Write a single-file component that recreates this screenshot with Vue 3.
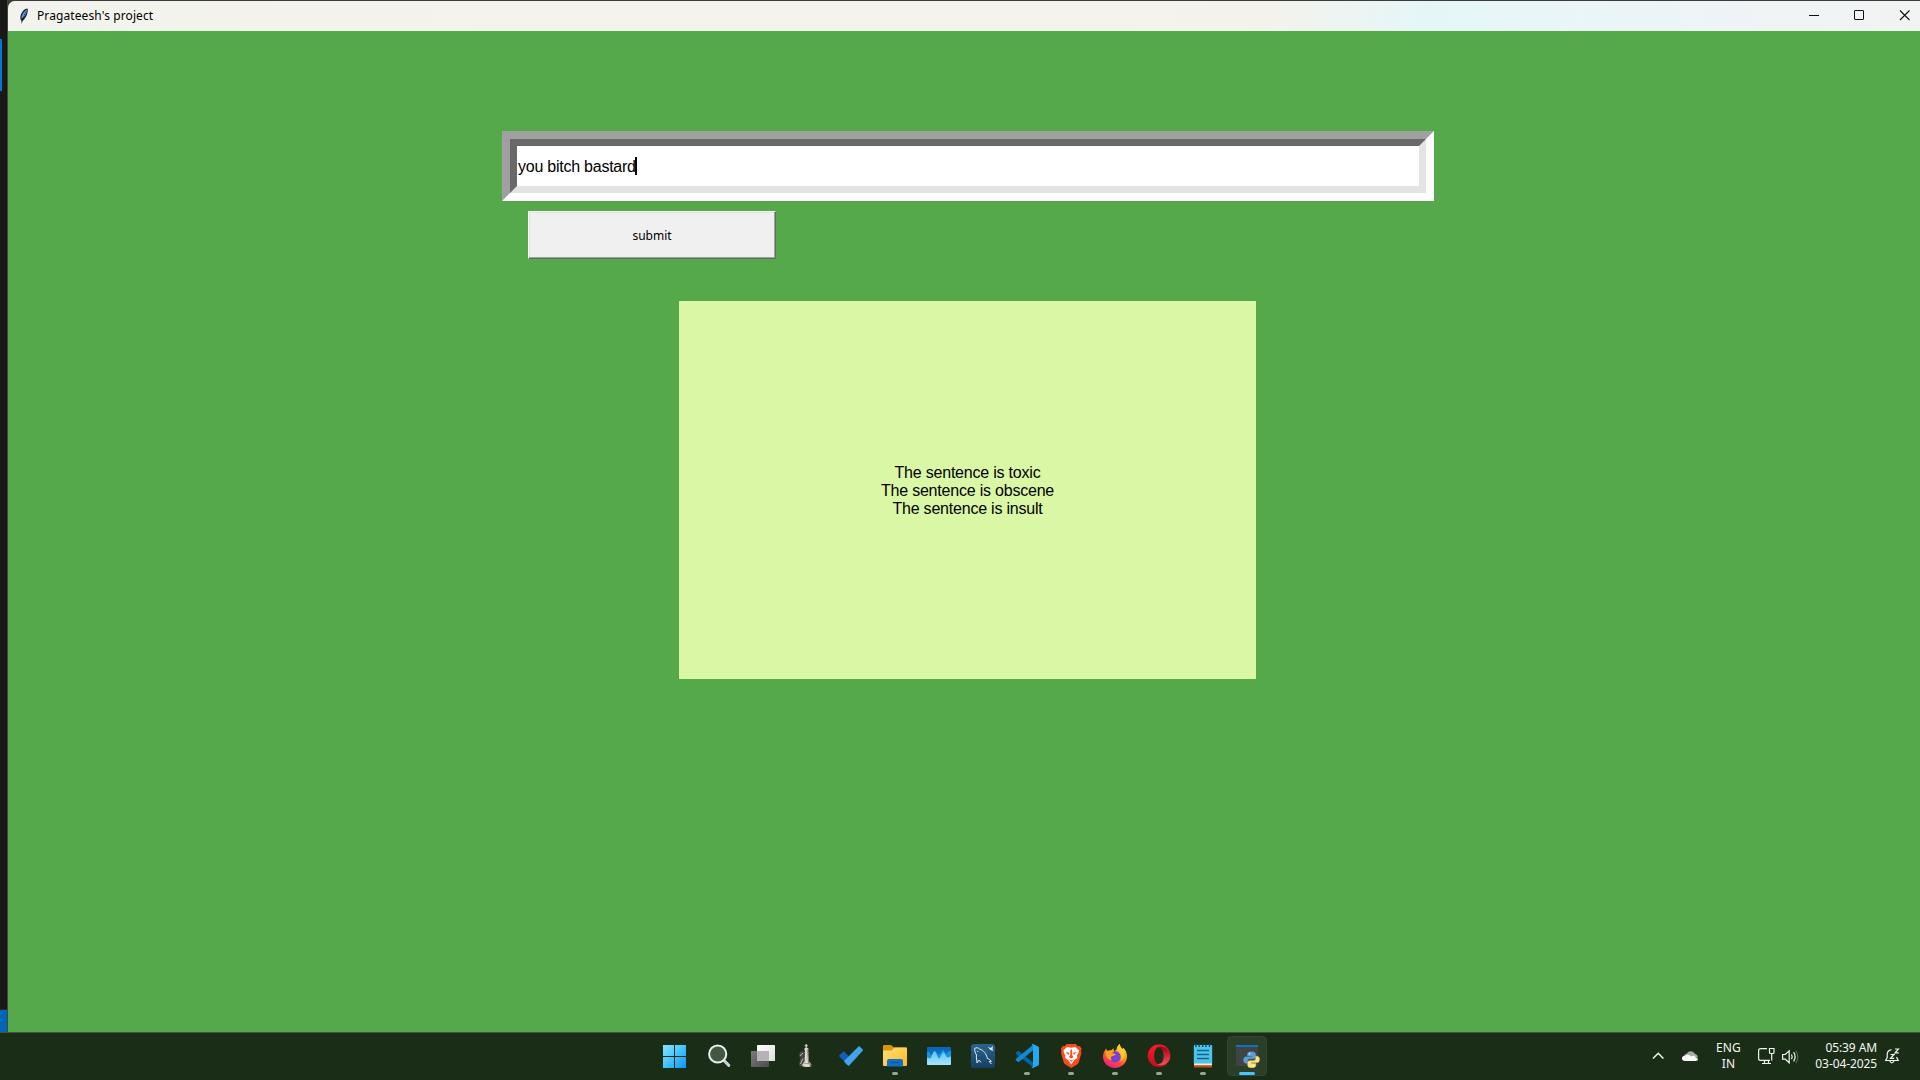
<script setup>
const results = ['The sentence is toxic', 'The sentence is obscene', 'The sentence is insult']
const entry = 'you bitch bastard'
</script>

<template>
  <div class="screen">
    <div class="desk">
      <div class="behind">
        <i class="accent"></i>
        <i class="status"></i>
      </div>
      <div class="window">
        <header class="titlebar">
          <svg class="feather" width="10" height="18" viewBox="0 0 10 18">
            <path d="M8.600 1.500C5.500 1.500 2.400 5 1.400 9.500c-.3 2 .2 3.500 1 4.200L2.600 17l1-3C6.500 12 9.500 6 8.600 1.500z" fill="#1c2536" />
            <path d="M7.900 2.400C5 4 3 7 2.200 11.500c2.600-1 5.600-4.500 5.700-9.100z" fill="#5f9ff0" />
            <path d="M6.800 4.500 2.700 14" stroke="#16243c" stroke-width=".8" stroke-dasharray="1.500 1.200" />
          </svg>
          <span class="title">Pragateesh's project</span>
          <svg class="controls" width="120" height="30" viewBox="0 0 120 30" fill="none" stroke="#111">
            <path d="M9 14.500h10" />
            <rect x="54.500" y="9.500" width="9" height="9" rx=".4" />
            <path d="M100 9.500l9.500 9.500M109.500 9.500 100 19" stroke-width="1.100" />
          </svg>
        </header>
        <main class="form">
          <div class="entry">
            <div class="entry-in"><div class="field"><span>{{ entry }}</span><i class="caret"></i></div></div>
          </div>
          <div class="button"><span>submit</span></div>
          <div class="result">
            <p v-for="r in results" :key="r">{{ r }}</p>
          </div>
        </main>
      </div>
    </div>

    <footer class="taskbar">
      <div class="apps">
        <svg viewBox="0 0 44 48">
          <defs><linearGradient id="win" gradientUnits="userSpaceOnUse" x1="11" y1="13" x2="34" y2="36"><stop offset="0" stop-color="#8be4ff" /><stop offset=".5" stop-color="#43c3fb" /><stop offset="1" stop-color="#0f93f6" /></linearGradient></defs>
          <path d="M11 13h11v11H11zM23 13h11v11H23zM11 25h11v11H11zM23 25h11v11H23z" fill="url(#win)" />
        </svg>
        <svg viewBox="0 0 44 48" fill="none">
          <path d="M27.500 28l5.300 5.400" stroke="#cfd4d6" stroke-width="3" stroke-linecap="round" />
          <circle cx="21.700" cy="22" r="8.600" fill="#44583f" stroke="#e9edee" stroke-width="2" />
        </svg>
        <svg viewBox="0 0 44 48">
          <defs>
            <linearGradient id="tvw" x1="0" y1="0" x2="1" y2="1"><stop offset="0" stop-color="#fff" /><stop offset="1" stop-color="#dedede" /></linearGradient>
            <linearGradient id="tvg" x1="0" y1="0" x2="1" y2="1"><stop offset="0" stop-color="#7c7c7c" /><stop offset="1" stop-color="#4d4d4d" /></linearGradient>
          </defs>
          <rect x="17" y="13" width="18" height="16" rx=".6" fill="url(#tvw)" />
          <rect x="11" y="19" width="18" height="16" rx=".6" fill="url(#tvg)" />
          <path d="M17 19h12v10H17z" fill="#b4b4b4" />
        </svg>
        <svg viewBox="0 0 44 48">
          <path d="M15 33c0-3 1.500-5 1.500-8-1.500 0-2-1-1.300-2.500.6-1.500 1.300-3.300 3.300-3.500 2.500.8 3.300 4 3 7l.5 8c-2 1.300-6 1-7-1z" fill="#4a4844" />
          <path d="M16.500 24l1-2 1.500-.8M16.500 32l2.300-5.500M18 33.500l2-3" stroke="#bab7af" stroke-width="1" fill="none" />
          <path d="M21.600 12h1.200v1.300h1v1h-1v1.500l1.700.8-.9 4h1.200l-.6 1.500.8 7.500 2.200 2.500.4 2c-2 1.300-7.500 1.400-9 0l.3-2 1.600-2.500.5-8-.6-1 .7-.3-.9-3.700 1.400-.8v-1.500h-.9v-1h.9z" fill="#d9d6ce" />
          <path d="M24 17v5l.5 8 2.300 4" stroke="#77736b" stroke-width="1" fill="none" />
          <path d="M19.500 31.500h7.500" stroke="#8e8a82" stroke-width=".7" />
          <path d="M26.500 34.700l3-1-2.300-2z" fill="#3d3a35" />
        </svg>
        <svg viewBox="0 0 44 48">
          <path d="M11.400 23.300l3.500-3.500q.7-.7 1.400 0l8.300 8.400-4.400 4.800-8.800-8.600q-.6-.6 0-1.100z" fill="#185abd" />
          <path d="M16.400 28.700 30.500 14.500q.6-.6 1.200 0l3 3q.7.7 0 1.300L21.200 33.400q-.7.7-1.400 0l-3.400-3.400q-.6-.7 0-1.300z" fill="#41a5ee" />
        </svg>
        <svg viewBox="0 0 44 48">
          <defs><linearGradient id="fold" x1="0" y1="0" x2="1" y2="1"><stop offset="0" stop-color="#ffe07a" /><stop offset="1" stop-color="#fdb91f" /></linearGradient></defs>
          <path d="M11 14q0-1 1-1h7l3 2.500h12q1 0 1 1V24H11z" fill="#d9960c" />
          <path d="M11 18.500h8.500l3-3H34q1 0 1 1V33q0 1-1 1H12q-1 0-1-1z" fill="url(#fold)" />
          <path d="M15 34.500V29q0-2 2-2h12q2 0 2 2v5.500z" fill="#1070c8" />
          <path d="M18.500 30.500h9" stroke="#0a4d98" />
          <rect x="20" y="40" width="6" height="3" rx="1.500" fill="#9ba298" />
        </svg>
        <svg viewBox="0 0 44 48">
          <defs>
            <linearGradient id="rm1" x1="0" y1="0" x2="0" y2="1"><stop offset="0" stop-color="#0a63b8" /><stop offset="1" stop-color="#0f7fd0" /></linearGradient>
            <linearGradient id="rm2" x1="0" y1="0" x2="0" y2="1"><stop offset="0" stop-color="#5cc4ee" /><stop offset="1" stop-color="#a8e6fb" /></linearGradient>
          </defs>
          <rect x="11" y="15" width="24" height="18" rx="1" fill="url(#rm1)" />
          <path d="M11 20h2l3 4 3-5.500 4 4.500 4-5.500 3 4.500 3-3h2v9H11z" fill="#1595dd" />
          <path d="M11 25.500l3.500 1 3-6.500q1-1.500 2 0l2.500 5.500 1.500 1 3-5.500q1-1.500 2 0l2.500 4.500 4-1v7.500q0 1-1 1H12q-1 0-1-1z" fill="url(#rm2)" />
        </svg>
        <svg viewBox="0 0 44 48" fill="none">
          <defs><linearGradient id="sql" x1="0" y1="0" x2="0" y2="1"><stop offset="0" stop-color="#2a638f" /><stop offset="1" stop-color="#173f62" /></linearGradient></defs>
          <rect x="11" y="12" width="24" height="24" rx="3" fill="url(#sql)" />
          <path d="M17 31c0-3-1-5-.5-8-1.200-2-2-4.500-1.800-6.500 1.500-1.300 3.600-.8 5 .6 4 1 6.300 4.500 7.800 9.400 1.800.8 3.200 1.800 4 2.800l-2.300.2 2.300 2.500M17 31l2-3 2 2.500M17.300 19l1 1" stroke="#e4edf3" stroke-width="1" />
          <path d="M27.500 14.500l3 1.500 2.500-2-.5 3 1 2-3-1z" fill="#dce8f0" />
        </svg>
        <svg viewBox="0 0 44 48">
          <path d="M12 20.500l1.700-1.300q.7-.5 1.400 0L30 31.500V36L12 22q-.8-.7 0-1.500z" fill="#0065a9" />
          <path d="M12 28.200l1.700 1.500q.7.500 1.400 0L30 17.500V12L12 26.700q-.8.700 0 1.500z" fill="#1489d4" />
          <path d="M29 12.100l5.200 2.400q.8.400.8 1.300v16.400q0 .9-.8 1.300L29 35.900q-1 .3-1.500-.3l1.500-1V13.400l-1.500-1q.5-.6 1.500-.3z" fill="#2aa6ee" />
          <rect x="20" y="40" width="6" height="3" rx="1.500" fill="#9ba298" />
        </svg>
        <svg viewBox="0 0 44 48">
          <path d="M18.500 12h9.300l2 2.300 2-.3 1.900 2.700-.8 2.300.5 2-2.700 9.500q-.5 1.300-2 2.300L23.300 36l-5.500-3.200q-1.500-1-2-2.300L13 21l.6-2-.8-2.300 1.900-2.700 2 .3z" fill="#fb4a1c" />
          <path d="M19 15l4.200.7 4.200-.7 3.600 3.500-.8 3-1.200 2 .3 2.500-3 2-3.100 4.500-3.100-4.500-3-2 .3-2.500-1.200-2-.8-3z" fill="#fff" />
          <path d="M17.500 20l3.700.8-.5 2.200zM29 20l-3.800.8.6 2.200zM22.500 17.500h1.500l.3 6 1.200 1.500-2.300 1.500-2.300-1.500 1.300-1.500zM20.500 27l2.700 1.500L26 27l-2.800 3z" fill="#fb4a1c" />
          <rect x="20" y="40" width="6" height="3" rx="1.500" fill="#9ba298" />
        </svg>
        <svg viewBox="0 0 44 48">
          <defs>
            <linearGradient id="ff" x1=".8" y1="0" x2=".3" y2="1"><stop offset="0" stop-color="#fff04a" /><stop offset=".4" stop-color="#ff9a1f" /><stop offset=".7" stop-color="#ff4a3c" /><stop offset="1" stop-color="#f0158a" /></linearGradient>
          </defs>
          <path d="M14 16.500l1.500 2.700h3l3-3 .5 3.300 2.500-2c.3-2.500 1.500-4.300 3.300-5.500.2 2.500 1.300 3.700 2.700 5l.8-1.200C33.500 18 35 21 35 24.500 35 31 29.500 36 23 36S11 31 11 24.500c0-3.500 1.500-5 3-8z" fill="url(#ff)" />
          <circle cx="23" cy="24.700" r="5.700" fill="#7a3fd8" />
          <path d="M14 19l3-.5 4.500-1 .5 2-2 1.500 4 1.300c-1.500 2-3 1.200-4.500 2-1 1.200-.8 3 .5 4-3-.3-5.500-2.800-6-5.300z" fill="#ffa01e" />
          <path d="M27.800 12c-2 2-3 4-2 6.500 1.500 2 3.700 3.500 3.700 7 0 2-1 3.500-2 4.500 4-1 5.500-6 4.700-9.500-1-3.500-4-4.500-4.400-8.500z" fill="#ffc928" />
          <rect x="20" y="40" width="6" height="3" rx="1.500" fill="#9ba298" />
        </svg>
        <svg viewBox="0 0 44 48">
          <defs><linearGradient id="op" x1="0" y1="0" x2="0" y2="1"><stop offset="0" stop-color="#ff1b2d" /><stop offset="1" stop-color="#c40a1e" /></linearGradient><linearGradient id="op2" x1="0" y1="0" x2="0" y2="1"><stop offset="0" stop-color="#a30014" /><stop offset="1" stop-color="#f5505c" /></linearGradient></defs>
          <path fill-rule="evenodd" d="M23 12.500a11.300 11.300 0 1 0 0 22.600 11.300 11.300 0 0 0 0-22.600zm0 2.600c3 0 4.800 3.800 4.800 8.700s-1.800 8.700-4.800 8.700-4.800-3.800-4.800-8.700 1.800-8.700 4.800-8.700z" fill="url(#op)" />
          <path d="M19.500 16.600c4.500-3.600 9-1.500 10.700-.2 5.500 4.500 5.500 10.500 0 15-2 1.500-6.500 3.300-10.700-.4 2.200 1.800 8.300 2 8.300-7.200s-6.100-9-8.300-7.200z" fill="url(#op2)" />
          <rect x="20" y="40" width="6" height="3" rx="1.500" fill="#9ba298" />
        </svg>
        <svg viewBox="0 0 44 48">
          <rect x="14" y="32" width="18" height="3.500" rx=".6" fill="#b8560f" />
          <rect x="14" y="30" width="18" height="3.200" fill="#f3efe9" />
          <rect x="13.800" y="13" width="18.400" height="18.500" rx=".8" fill="#50c3e6" />
          <path d="M16 12v3M19.300 12v3M22.700 12v3M26 12v3M29.500 12v3" stroke="#0d4f78" stroke-width="1.400" />
          <path d="M17 18.500h12M17 22.500h12M17 26.500h12" stroke="#0b6590" stroke-width="1.300" />
          <rect x="20" y="40" width="6" height="3" rx="1.500" fill="#9ba298" />
        </svg>
        <svg viewBox="0 0 44 48">
          <rect x="3.500" y="4.500" width="39" height="39" rx="4" fill="#2a3e28" stroke="#344732" />
          <rect x="12" y="13" width="22" height="21" fill="#3f4345" />
          <path d="M12 13h22v2H12z" fill="#1170c4" />
          <path d="M15 19h5M15 22h3M15 25.500h4" stroke="#2f5a38" />
          <path d="M27.300 19.700c-3 0-3.800 1-3.800 2.300v2h4.300v.8H22c-1.700 0-2.500 1.400-2.500 3.200s.8 3.300 2.500 3.300h1.500v-2.200c0-1.300 1-2.300 2.300-2.300h3.700c1.200 0 2-.9 2-2V22c0-1.300-1.200-2.300-4.200-2.300z" fill="#5b9fd4" stroke="#5b9fd4" stroke-width=".4" />
          <path d="M27.900 35.700c3 0 3.800-1 3.800-2.300v-2h-4.300v-.8H33c1.700 0 2.500-1.400 2.500-3.200s-.8-3.200-2.500-3.200h-1.300v2.200c0 1.300-1 2.300-2.300 2.300h-3.700c-1.200 0-2 .9-2 2v2.700c0 1.300 1.200 2.300 4.200 2.300z" fill="#ffe27a" stroke="#ffe27a" stroke-width=".4" />
          <circle cx="25.500" cy="21.700" r=".8" fill="#fff" /><circle cx="29.700" cy="33.600" r=".8" fill="#fff" />
          <rect x="15" y="40" width="16" height="3" rx="1.500" fill="#4cc2ff" />
        </svg>
      </div>
      <div class="tray">
        <svg width="60" height="48" viewBox="0 0 60 48" fill="none">
          <path d="M3 26.500l5.200-5.200 5.200 5.200" stroke="#f4f6f4" stroke-width="1.500" />
          <path d="M34 25c0-2.500 1.800-3.500 3-3.600 1.500-2.800 6-3.300 8 .5 2 .3 2.800 2 2.800 3.500z" fill="#a7aea6" />
          <path d="M35 29c-4 0-4-5.500 0-5.300 2.500-1.800 4.500-.8 6 .8 2-1.300 4.300-.5 4.700 1 3 .3 2.800 3.500.3 3.500z" fill="#f7f8f7" />
        </svg>
        <div class="lang"><span>ENG</span><span>IN</span></div>
        <svg width="56" height="48" viewBox="0 0 56 48" fill="none" stroke="#f1f4f1" stroke-width="1.200">
          <path d="M13 16.600H6.500q-1.900 0-1.900 1.900v8q0 1.900 1.900 1.900h9.500M8 31.500h9M10.500 28.500v3M14.500 28.500v3" />
          <path d="M15.500 16.500h4.500v4q0 1-1 1h-2.500q-1 0-1-1zM17.700 21.500v7" />
          <path d="M28.600 22.500h2.600l4-3.700v12l-4-3.700h-2.600zM37.500 22.500q1.300 2.300 0 4.600M39.600 20.200q3 4.600 0 9.200" />
          <path d="M41.800 18.500q4 6.300 0 12.600" stroke="#53664f" />
        </svg>
        <div class="clock"><span>05:39 AM</span><span>03-04-2025</span></div>
        <svg width="20" height="48" viewBox="0 0 20 48" fill="none" stroke="#f1f4f1" stroke-width="1.200">
          <path d="M7.500 17.600Q3.200 18.500 3.200 22.500v3l-1.500 3h12.500l-1.400-3V25M5.800 29q2 3.600 4.200 0" />
          <path d="M6.500 22.500h3.500l-3.500 3.800h3.700M11 17h3.500L11 20.800h3.700" />
        </svg>
      </div>
    </footer>
  </div>
</template>

<style>
body { margin: 0; overflow: hidden; }
</style>

<style scoped>
.screen { width: 1920px; height: 1080px; display: flex; flex-direction: column; overflow: hidden; background: #3d3b3c; }
.desk { height: 1032px; display: flex; }
.behind { width: 7px; background: #191919; border-right: 1px solid #3f4a3d; display: flex; flex-direction: column; justify-content: space-between; }
.accent { width: 2px; height: 52px; margin-top: 39px; background: #0078d4; }
.status { height: 22px; background: #0066b8; border-top: 1px solid #2b2b2b; }
.window { flex: 1; margin-top: 1px; display: flex; flex-direction: column; border-top-left-radius: 7px; overflow: hidden; background: #55a94a; }
.titlebar { height: 30px; box-sizing: border-box; display: flex; align-items: center; padding-left: 11px; background: linear-gradient(90deg, #f2f3ec 0, #f5f4ec 45%, #f3f3ec 66%, #e6f6f7 74%, #e8f6f8 79%, #eff4f5 92%, #f2f3f3 100%); }
.title { margin-left: 8px; font: 12px/30px "Noto Sans", sans-serif; color: #000; flex: 1; letter-spacing: .1px; }
.form { flex: 1; display: flex; flex-direction: column; padding: 100px 0 0 494px; }
.entry { box-sizing: border-box; width: 932px; height: 70px; border: 8px solid; border-color: #a0a0a0 #fff #fff #a0a0a0; }
.entry-in { box-sizing: border-box; height: 54px; border: 7px solid; border-color: #696969 #e3e3e3 #e3e3e3 #696969; background: #fff; }
.field { height: 40px; display: flex; align-items: center; padding-left: 1px; font: 16px/18px "Liberation Sans", Arial, sans-serif; letter-spacing: -.24px; color: #000; }
.field span { padding-top: 2px; }
.caret { width: 2px; height: 18px; background: #000; margin-left: -1px; }
.button { box-sizing: border-box; width: 248px; height: 48px; margin: 10px 0 0 26px; padding-top: 2px; border: 1px solid; border-color: #fff #696969 #696969 #fff; background: #f0f0f0; box-shadow: inset -1px -1px #a0a0a0, inset 1px 1px #e3e3e3; display: flex; align-items: center; justify-content: center; font: 12px/16px "Noto Sans", sans-serif; color: #000; }
.result { box-sizing: border-box; width: 577px; height: 378px; margin: 42px 0 0 177px; padding-top: 2px; background: #daf7a6; display: flex; flex-direction: column; justify-content: center; text-align: center; font: 16px/18px "Liberation Sans", Arial, sans-serif; letter-spacing: -.21px; color: #000; }
.result p { margin: 0; }
.taskbar { height: 48px; display: flex; background: linear-gradient(#46543f 0 1px, #1a2e17 1px); }
.apps { display: flex; margin-left: 652px; }
.apps svg { width: 44px; height: 48px; }
.tray { margin-left: auto; display: flex; padding-right: 16px; color: #f4f6f4; font: 12px/16px "Noto Sans", sans-serif; }
.lang, .clock { box-sizing: border-box; display: flex; flex-direction: column; padding-top: 8px; }
.lang { width: 44px; padding-right: 7px; align-items: center; letter-spacing: .1px; }
.clock { width: 67px; align-items: flex-end; margin-right: 7px; letter-spacing: -.1px; }
</style>
